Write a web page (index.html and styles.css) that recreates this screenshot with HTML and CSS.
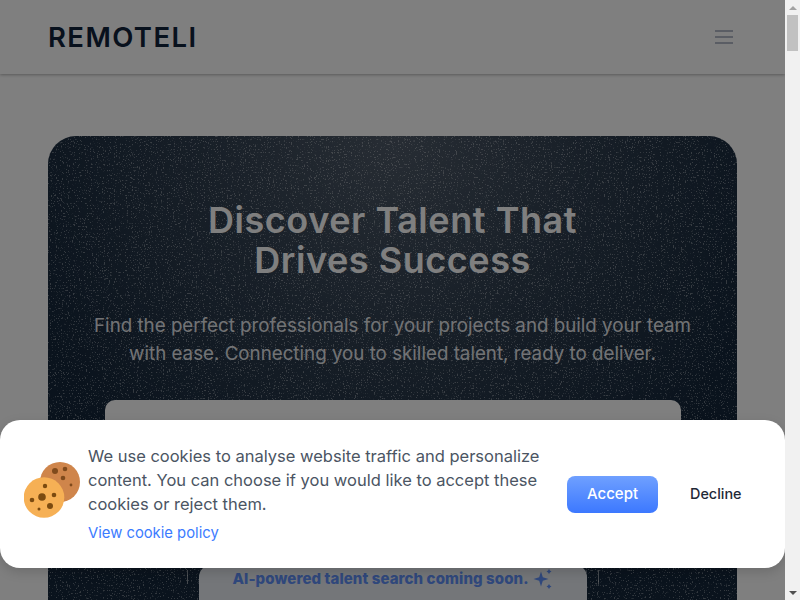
FILE: index.html
```html
<!DOCTYPE html>
<html lang="en">
<head>
    <meta charset="UTF-8">
    <meta name="viewport" content="width=device-width, initial-scale=1.0">
    <title>Remoteli</title>
    <link rel="stylesheet" href="styles.css">
</head>
<body>
    <div class="viewport">
        <header class="site-header">
            <a class="logo" href="#">REMOTELI</a>
            <button class="menu-button" aria-label="Menu">
                <svg width="18" height="14" viewBox="0 0 18 14"><path d="M0 1h18M0 7h18M0 13h18" stroke="#b4bac8" stroke-width="2"/></svg>
            </button>
        </header>

        <main class="page">
            <section class="hero">
                <svg class="noise" aria-hidden="true">
                    <filter id="grain" x="0" y="0" width="100%" height="100%">
                        <feTurbulence type="fractalNoise" baseFrequency="0.83 0.61" numOctaves="3" seed="23"/>
                        <feColorMatrix type="matrix" values="0 0 0 0 1  0 0 0 0 1  0 0 0 0 1  9 0 0 0 -5.600"/>
                    </filter>
                    <rect width="100%" height="100%" filter="url(#grain)"/>
                </svg>
                <h1>Discover Talent That<br>Drives Success</h1>
                <p class="lead">Find the perfect professionals for your projects and build your team with ease. Connecting you to skilled talent, ready to deliver.</p>
                <div class="search-box"></div>
                <div class="coming-soon">
                    <span>AI-powered talent search coming soon.</span>
                    <svg width="20" height="22" viewBox="0 0 20 22"><path fill="#6090f8" d="M8 2.500 9.800 8.200 15.500 10 9.800 11.800 8 17.500 6.200 11.800 .5 10 6.200 8.200zM16 0l.9 1.600 1.600.9-1.600.9-.9 1.600-.9-1.600-1.600-.9 1.600-.9zM16 15l.9 1.600 1.600.9-1.600.9-.9 1.600-.9-1.600-1.600-.9 1.600-.9z"/></svg>
                </div>
            </section>
        </main>

        <div class="overlay"></div>

        <div class="cookie-banner">
            <svg class="cookie-icon" width="56" height="56" viewBox="0 0 56 56">
                <circle cx="36" cy="20" r="20" fill="#cf854b"/>
                <circle cx="31" cy="9" r="3" fill="#7f4a1c"/>
                <circle cx="41" cy="7" r="2.300" fill="#7f4a1c"/>
                <circle cx="39" cy="16" r="2.300" fill="#7f4a1c"/>
                <circle cx="47" cy="23" r="1.400" fill="#7f4a1c"/>
                <circle cx="20" cy="35.500" r="20.300" fill="#f6b055"/>
                <circle cx="21" cy="24" r="2.200" fill="#7b4a10"/>
                <circle cx="18" cy="35" r="3.800" fill="#7b4a10"/>
                <circle cx="30" cy="33" r="2.300" fill="#7b4a10"/>
                <circle cx="8" cy="38" r="2.300" fill="#7b4a10"/>
                <circle cx="26" cy="44" r="3" fill="#7b4a10"/>
                <circle cx="15" cy="47" r="1.500" fill="#7b4a10"/>
            </svg>
            <div class="cookie-text">
                <p>We use cookies to analyse website traffic and personalize content. You can choose if you would like to accept these cookies or reject them.</p>
                <a href="#">View cookie policy</a>
            </div>
            <div class="cookie-actions">
                <button class="accept">Accept</button>
                <button class="decline">Decline</button>
            </div>
        </div>
    </div>

    <div class="scrollbar">
        <div class="arrow arrow-up"></div>
        <div class="thumb"></div>
        <div class="arrow arrow-down"></div>
    </div>
</body>
</html>
```

FILE: styles.css
```css
* {
    box-sizing: border-box;
}
body {
    margin: 0;
    height: 100vh;
    display: flex;
    overflow: hidden;
    font-family: Inter, "Noto Sans", sans-serif;
    background-color: #fff;
    color: #4b5563;
}
.viewport {
    position: relative;
    flex: 1;
    overflow: hidden;
}
.site-header {
    height: 74px;
    padding: 0 48px;
    display: flex;
    align-items: center;
    justify-content: space-between;
    background-color: #fff;
    box-shadow: 0 1px 3px rgba(0, 0, 0, 0.3);
}
.logo {
    font-size: 27.500px;
    font-weight: 600;
    letter-spacing: 1.4px;
    color: #10233a;
    text-decoration: none;
}
.menu-button {
    margin-right: 4px;
    padding: 0;
    display: flex;
    background: none;
    border: none;
}
.page {
    padding: 62px 48px 60px;
}
.hero {
    position: relative;
    height: 620px;
    padding: 64px 47px 0;
    border-radius: 28px;
    text-align: center;
    background: radial-gradient(ellipse 400px 420px at 50% 0, #4f5a68 0%, #2e3d4e 50%, #14263a 100%);
    background-color: #14263a;
}
.noise {
    position: absolute;
    top: 0;
    left: 0;
    width: 100%;
    height: 100%;
    border-radius: 28px;
    opacity: 0.35;
}
.hero h1, .lead, .search-box, .coming-soon {
    position: relative;
}
.hero h1 {
    margin: 0 0 32px;
    font-size: 36px;
    line-height: 40px;
    font-weight: 600;
    letter-spacing: 0.55px;
    color: #fff;
}
.lead {
    margin: 0 -6px 32px;
    font-size: 18.750px;
    line-height: 28px;
    color: #e5e7eb;
}
.search-box {
    height: 130px;
    margin: 0 9px 0 10px;
    border-radius: 10px;
    background-color: #fff;
}
.coming-soon {
    width: 388px;
    height: 65px;
    margin: 35px auto 0;
    padding-top: 4px;
    display: flex;
    justify-content: center;
    gap: 4px;
    border-radius: 12px;
    background-color: #e8ecf2;
    color: #6090f8;
    font-size: 15px;
    font-weight: 800;
    letter-spacing: 0.1px;
}
.coming-soon::before, .coming-soon::after {
    content: "";
    position: absolute;
    top: 5px;
    width: 1px;
    height: 14px;
    background-color: rgba(255, 255, 255, 0.5);
}
.coming-soon::before {
    left: -12px;
}
.coming-soon::after {
    right: -12px;
}
.overlay {
    position: absolute;
    top: 0;
    left: 0;
    right: 0;
    bottom: 0;
    background-color: rgba(0, 0, 0, 0.5);
}
.cookie-banner {
    position: absolute;
    left: 0;
    right: 0;
    top: 420px;
    height: 148px;
    padding: 0 30px 0 24px;
    display: flex;
    align-items: center;
    background-color: #fff;
    border-radius: 20px;
    box-shadow: 0 4px 12px rgba(0, 0, 0, 0.15);
}
.cookie-icon {
    flex-shrink: 0;
    margin: -8px 8px 0 0;
}
.cookie-text {
    width: 460px;
    margin-top: -2px;
    font-size: 16.500px;
}
.cookie-text p {
    margin: 0 0 6px;
    line-height: 24px;
}
.cookie-text a {
    font-size: 14.800px;
    color: #3b7bff;
    text-decoration: none;
}
.cookie-actions {
    margin-left: 19px;
    display: flex;
    align-items: center;
    gap: 32px;
}
.cookie-actions button {
    padding: 0 0 2px;
    font-family: inherit;
    font-weight: 500;
    border: none;
}
.accept {
    width: 91px;
    height: 37px;
    border-radius: 8px;
    font-size: 15px;
    color: #fff;
    background: linear-gradient(#6fa0ff, #3c78ff);
}
.decline {
    font-size: 14.400px;
    color: #1f2937;
    background: none;
}
.scrollbar {
    width: 15px;
    flex-shrink: 0;
    display: flex;
    flex-direction: column;
    background-color: #f1f1f1;
}
.arrow {
    width: 0;
    height: 0;
    margin: 6px auto 5px;
    border-left: 4px solid transparent;
    border-right: 4px solid transparent;
}
.arrow-up {
    border-bottom: 4px solid #a3a3a3;
}
.arrow-down {
    margin-top: auto;
    border-top: 4px solid #505050;
}
.thumb {
    height: 36px;
    margin: 0 2px;
    background-color: #c1c1c1;
}
```
